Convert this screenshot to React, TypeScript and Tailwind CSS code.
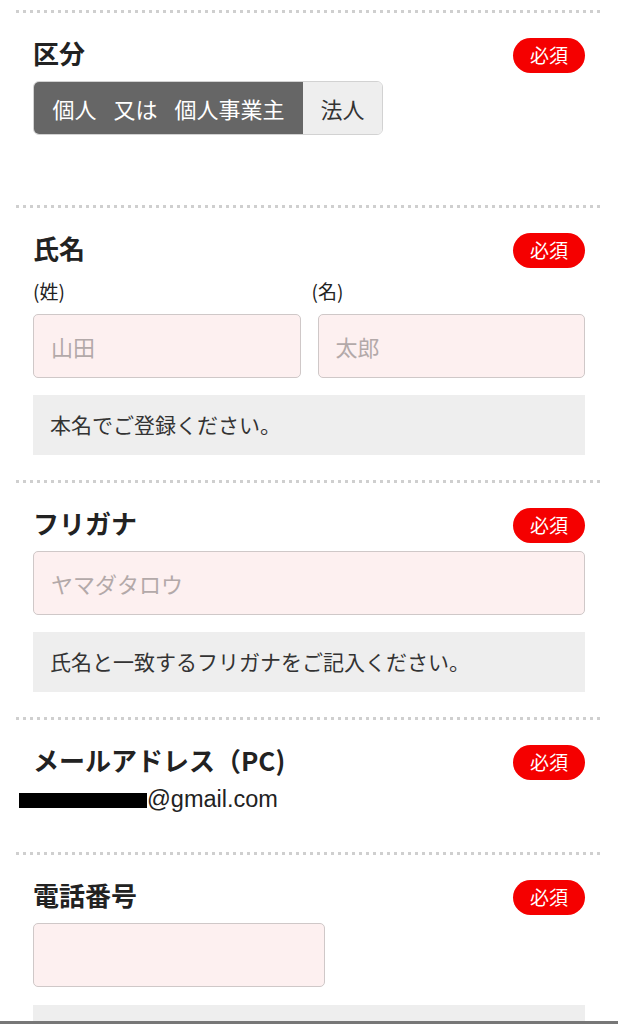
import React from 'react'

const Divider = () => (
  <div className="h-[3px] bg-[repeating-linear-gradient(90deg,#cfcfcf_0px,#cfcfcf_3px,transparent_3px,transparent_7px)]" />
)

const Required = () => (
  <span className="flex h-[35px] w-[72px] shrink-0 items-center justify-center rounded-full bg-[#f50000] text-[19px] text-white">
    必須
  </span>
)

const Header = ({ title }: { title: string }) => (
  <div className="flex h-[35px] items-start justify-between">
    <h2 className="text-[26px] font-semibold leading-[30px] text-[#222]">{title}</h2>
    <Required />
  </div>
)

const Field = ({ placeholder, className = '' }: { placeholder?: string; className?: string }) => (
  <div
    className={`flex h-[64px] items-center rounded-[5px] border-[1.5px] border-[#cfc8c8] bg-[#fdf0f0] px-[17px] text-[22px] text-[#b3a9a9] ${className}`}
  >
    {placeholder}
  </div>
)

const Hint = ({ children }: { children: React.ReactNode }) => (
  <div className="flex h-[60px] items-center bg-[#eeeeee] px-[17px] text-[21px] text-[#333]">{children}</div>
)

export default function App() {
  return (
    <div className="flex h-[1024px] flex-col overflow-hidden bg-white font-['Noto_Sans_CJK_JP',sans-serif] text-[#222]">
      <div className="flex-1 overflow-hidden px-4 pt-[10px]">
        {/* 区分 */}
        <Divider />
        <section className="px-[17px] pb-[70px] pt-[25px]">
          <Header title="区分" />
          <div className="mt-[8px] inline-flex h-[54px] overflow-hidden rounded-[6px] border border-[#d2d2d2] text-[22px]">
            <div className="flex w-[269px] items-center justify-center bg-[#666666] text-white [word-spacing:12px]">
              個人 又は 個人事業主
            </div>
            <div className="flex w-[79px] items-center justify-center bg-[#eeeeee] text-[#333]">法人</div>
          </div>
        </section>

        {/* 氏名 */}
        <Divider />
        <section className="px-[17px] pb-[25px] pt-[25px]">
          <Header title="氏名" />
          <div className="mt-[10px] grid grid-cols-2 gap-[17px] text-[19px] leading-[26px] text-[#222]">
            <span>(姓)</span>
            <span className="-ml-[6px]">(名)</span>
          </div>
          <div className="mt-[10px] grid grid-cols-2 gap-[17px]">
            <Field placeholder="山田" />
            <Field placeholder="太郎" />
          </div>
          <div className="mt-[17px]">
            <Hint>本名でご登録ください。</Hint>
          </div>
        </section>

        {/* フリガナ */}
        <Divider />
        <section className="px-[17px] pb-[25px] pt-[25px]">
          <Header title="フリガナ" />
          <Field placeholder="ヤマダタロウ" className="mt-[8px]" />
          <div className="mt-[17px]">
            <Hint>氏名と一致するフリガナをご記入ください。</Hint>
          </div>
        </section>

        {/* メールアドレス */}
        <Divider />
        <section className="px-[17px] pb-[37px] pt-[25px]">
          <Header title="メールアドレス（PC)" />
          <div className="mt-[5px] flex h-[30px] items-center text-[23.5px] font-['Liberation_Sans',sans-serif] text-[#222]">
            <span className="-ml-[14px] inline-block h-[15px] w-[128px] bg-black" />
            <span>@gmail.com</span>
          </div>
        </section>

        {/* 電話番号 */}
        <Divider />
        <section className="px-[17px] pt-[25px]">
          <Header title="電話番号" />
          <Field className="mt-[8px] w-[292px]" />
          <div className="mt-[18px]">
            <Hint>{'\u00a0'}</Hint>
          </div>
        </section>
      </div>
      <div className="h-[3px] bg-[#777]" />
    </div>
  )
}
